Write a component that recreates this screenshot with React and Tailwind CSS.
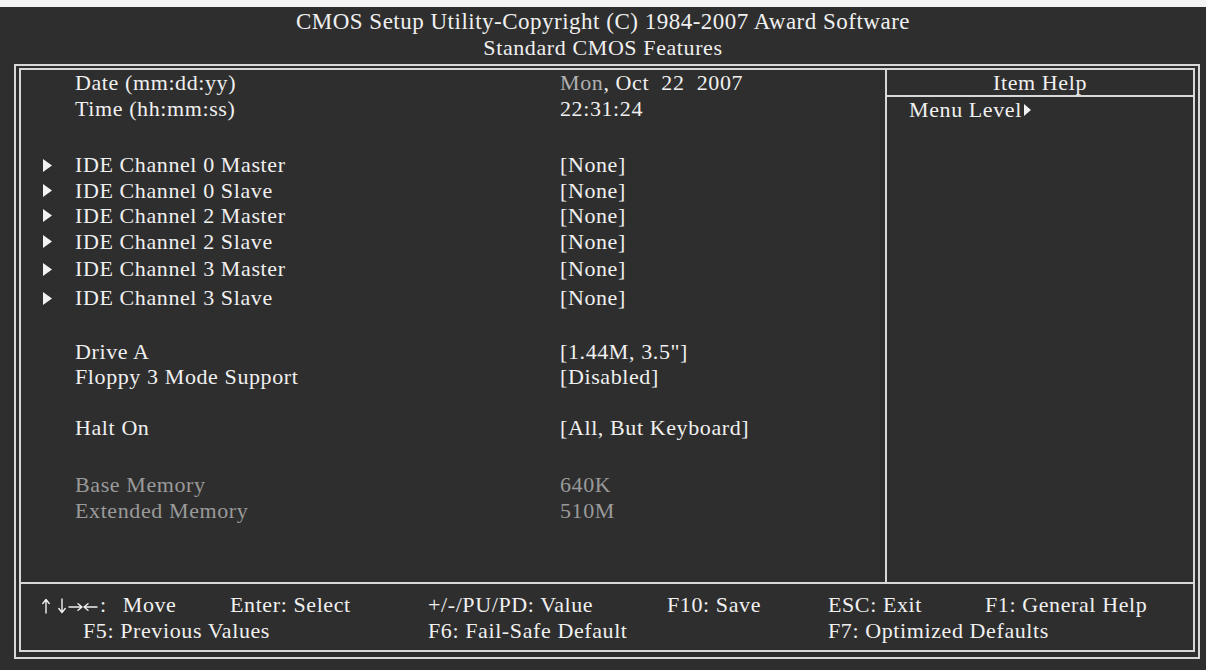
import React from "react";

const rows = [
  { h: "h-[26px]", label: "Date (mm:dd:yy)", value: "date" },
  { h: "h-[25px]", label: "Time (hh:mm:ss)", value: "22:31:24" },
  { h: "h-[31px]" },
  { h: "h-[26px]", label: "IDE Channel 0 Master", value: "[None]", arrow: true },
  { h: "h-[25px]", label: "IDE Channel 0 Slave", value: "[None]", arrow: true },
  { h: "h-[25px]", label: "IDE Channel 2 Master", value: "[None]", arrow: true },
  { h: "h-[27px]", label: "IDE Channel 2 Slave", value: "[None]", arrow: true },
  { h: "h-[28px]", label: "IDE Channel 3 Master", value: "[None]", arrow: true },
  { h: "h-[30px]", label: "IDE Channel 3 Slave", value: "[None]", arrow: true },
  { h: "h-[26px]" },
  { h: "h-[26px]", label: "Drive A", value: '[1.44M, 3.5"]' },
  { h: "h-[24px]", label: "Floppy 3 Mode Support", value: "[Disabled]" },
  { h: "h-[26px]" },
  { h: "h-[26px]", label: "Halt On", value: "[All, But Keyboard]" },
  { h: "h-[31px]" },
  { h: "h-[26px]", label: "Base Memory", value: "640K", dim: true },
  { h: "h-[26px]", label: "Extended Memory", value: "510M", dim: true },
];

function Tri({ className }) {
  return (
    <svg className={className} width="9" height="13" viewBox="0 0 9 13">
      <polygon points="0,0 9,6.5 0,13" fill="#f2f2f2" />
    </svg>
  );
}

function Arrows() {
  const s = { stroke: "#f0f0f0", strokeWidth: 1.4, fill: "none", strokeLinecap: "round", strokeLinejoin: "round" };
  return (
    <svg width="58" height="16" viewBox="0 0 58 16" className="mt-[1px]">
      {/* up */}
      <path d="M4 15 V2 M0.8 5.5 L4 1.5 L7.2 5.5" {...s} />
      {/* down */}
      <path d="M20 1 V14 M16.8 10.5 L20 14.5 L23.2 10.5" {...s} />
      {/* right */}
      <path d="M27 9 H39.5 M36 5.8 L40 9 L36 12.2" {...s} />
      {/* left */}
      <path d="M55 9 H42.5 M46 5.8 L42 9 L46 12.2" {...s} />
    </svg>
  );
}

export default function App() {
  return (
    <div
      className="w-[1206px] h-[670px] bg-[#2e2e2e] text-[#f0f0f0] overflow-hidden flex flex-col"
      style={{ fontFamily: '"Liberation Serif", "Times New Roman", serif' }}
    >
      <div className="h-[7px] bg-[#f4f4f4] shrink-0" />
      <div className="h-[57px] shrink-0 pt-[2px] flex flex-col items-center">
        <div className="h-[26px] leading-[26px] text-[23px] tracking-[0.5px] whitespace-nowrap">
          CMOS Setup Utility-Copyright (C) 1984-2007 Award Software
        </div>
        <div className="h-[26px] leading-[26px] text-[22px] tracking-[0.6px] whitespace-nowrap">
          Standard CMOS Features
        </div>
      </div>

      <div className="ml-[14px] w-[1186px] border-2 border-[#d8d8d8] pt-[2px] pl-[3px] pr-[3px] pb-[5px]">
        <div className="border-2 border-[#d8d8d8] flex flex-col">
          <div className="h-[514px] flex border-b-2 border-[#d8d8d8]">
            <div className="w-[864px] flex flex-col text-[22px] tracking-[0.6px]">
              {rows.map((r, i) => (
                <div key={i} className={`${r.h} flex items-center`}>
                  {r.label && (
                    <>
                      <div className="w-[54px] pl-[22px] flex items-center">
                        {r.arrow && <Tri />}
                      </div>
                      <div
                        className={`w-[485px] leading-[24px] ${
                          r.dim ? "text-[#9a9a9a]" : ""
                        }`}
                      >
                        {r.label}
                      </div>
                      <div
                        className={`leading-[24px] whitespace-pre ${
                          r.dim ? "text-[#9a9a9a]" : ""
                        }`}
                      >
                        {r.value === "date" ? (
                          <>
                            <span className="text-[#b0b0b0]">Mon</span>
                            <span>{", Oct  22  2007"}</span>
                          </>
                        ) : (
                          r.value
                        )}
                      </div>
                    </>
                  )}
                </div>
              ))}
            </div>
            <div className="flex-1 border-l-2 border-[#d8d8d8] flex flex-col text-[22px] tracking-[0.6px]">
              <div className="h-[27px] border-b-2 border-[#d8d8d8] flex items-center justify-center leading-[24px]">
                Item Help
              </div>
              <div className="h-[25px] pl-[22px] flex items-center leading-[24px]">
                <span>Menu Level</span>
                <svg width="7" height="12" viewBox="0 0 7 12" className="ml-[2px]">
                  <polygon points="0,0 7,6 0,12" fill="#f2f2f2" />
                </svg>
              </div>
            </div>
          </div>

          <div className="h-[66px] pt-[8px] text-[22px] tracking-[0.6px] leading-[26px]">
            <div className="h-[26px] flex pl-[21px] whitespace-pre">
              <span className="w-[188px] flex items-center">
                <Arrows />
                <span>:</span>
                <span className="ml-[16px]">Move</span>
              </span>
              <span className="w-[198px]">Enter: Select</span>
              <span className="w-[239px]">+/-/PU/PD: Value</span>
              <span className="w-[161px]">F10: Save</span>
              <span className="w-[157px]">ESC: Exit</span>
              <span>F1: General Help</span>
            </div>
            <div className="h-[26px] flex pl-[62px] whitespace-pre">
              <span className="w-[345px]">F5: Previous Values</span>
              <span className="w-[400px]">F6: Fail-Safe Default</span>
              <span>F7: Optimized Defaults</span>
            </div>
          </div>
        </div>
      </div>
    </div>
  );
}
